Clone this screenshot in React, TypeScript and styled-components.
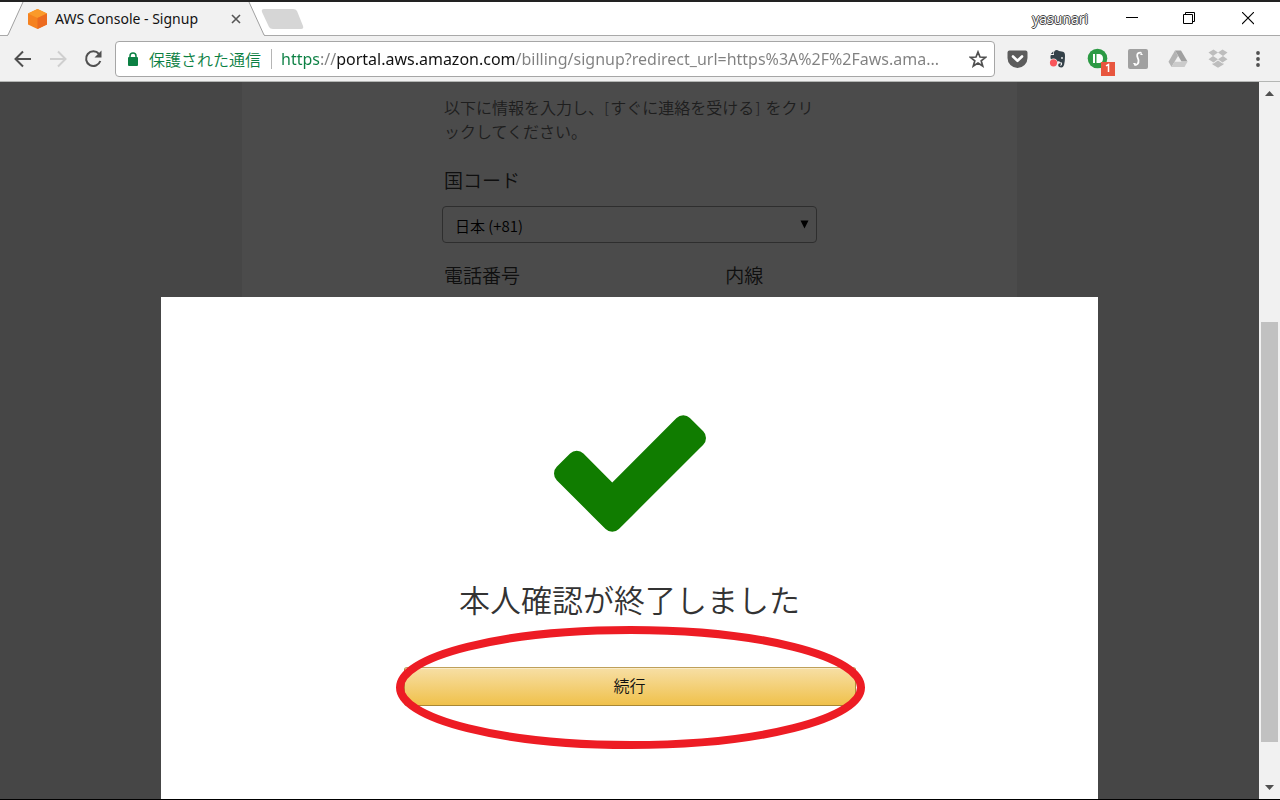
import React from 'react';
import styled, { createGlobalStyle } from 'styled-components';

const uiFont = '"Noto Sans", "Noto Sans CJK JP", sans-serif';
const pageFont = '"Noto Sans CJK JP", sans-serif';

const GlobalStyle = createGlobalStyle`
  *, *::before, *::after { box-sizing: border-box; }
  html, body, #root { height: 100%; }
  body { margin: 0; overflow: hidden; background: #000; font-family: ${uiFont}; }
  button, input, select { font-family: inherit; margin: 0; }
  svg { display: block; }
`;

const Window = styled.div`
  display: flex;
  flex-direction: column;
  height: 100%;
  background: #fff;
  border-top: 2px solid #222;
  border-bottom: 1px solid #000;
`;

const TitleBar = styled.header`
  display: flex;
  align-items: stretch;
  flex: none;
  height: 34px;
  padding-left: 7px;
  background: linear-gradient(#a9a9a9, #a9a9a9) bottom / 100% 1px no-repeat #fff;
`;

const Tab = styled.div`
  position: relative;
  display: flex;
  align-items: center;
  width: 258px;
  padding: 0 21px 0 20px;
`;

const TabShape = styled.svg`
  position: absolute;
  inset: 0;
  width: 100%;
  height: 100%;
`;

const TabTitle = styled.span`
  position: relative;
  flex: 1;
  margin-left: 7px;
  font-size: 14px;
  line-height: 20px;
  color: #111;
  white-space: nowrap;
`;

const Favicon = styled.svg`
  position: relative;
  width: 21px;
  height: 22px;
`;

const IconButton = styled.button<{ $width: number }>`
  position: relative;
  display: flex;
  align-items: center;
  justify-content: center;
  flex: none;
  width: ${(p) => p.$width}px;
  padding: 0;
  border: 0;
  background: none;
  color: #4a4a4a;
`;

const NewTab = styled(IconButton)`
  margin-left: -6px;
`;

const WindowControls = styled.div`
  display: flex;
  margin-left: auto;
  padding-right: 3px;
`;

const UserName = styled.span`
  align-self: center;
  margin-right: 15px;
  font-family: "Open Sans", sans-serif;
  font-size: 14px;
  line-height: 20px;
  color: #fff;
  text-shadow: 1px 0 #444, -1px 0 #444, 0 1px #444, 0 -1px #444;
`;

const Toolbar = styled.nav`
  display: flex;
  align-items: center;
  flex: none;
  height: 46px;
  padding: 0 2px 0 5px;
  background: #f1f1f1;
  border-bottom: 1px solid #b4b6b4;
`;

const AddressBar = styled.div`
  display: flex;
  align-items: center;
  flex: 1;
  min-width: 0;
  height: 36px;
  margin: 0 3px 0 5px;
  padding: 0 1px 0 11px;
  background: #fff;
  border: 1px solid #a6a6a6;
  border-radius: 4px;
`;

const Secure = styled.span`
  margin-left: 10px;
  padding-right: 10px;
  border-right: 1px solid #b5b5b5;
  font-family: ${pageFont};
  font-size: 16px;
  font-weight: 350;
  line-height: 20px;
  color: #0b8043;
  white-space: nowrap;
`;

const Address = styled.input`
  flex: 1;
  min-width: 0;
  height: 28px;
  margin-left: 9px;
  padding: 0;
  border: 0;
  outline: 0;
  font-size: 16px;
  color: #808080;
  -webkit-text-fill-color: transparent;
  background: linear-gradient(
    90deg,
    #0b8043 0 39px,
    #808080 39px 56px,
    #111 56px 234px,
    #808080 234px
  );
  background-clip: text;
  -webkit-background-clip: text;
`;

const Content = styled.div`
  display: flex;
  flex: 1;
  min-height: 0;
`;

const Page = styled.main`
  position: relative;
  flex: 1;
  overflow: hidden;
  background: #eaeaea;
  font-family: ${pageFont};
`;

const Sheet = styled.section`
  display: flex;
  justify-content: center;
  width: 62%;
  max-width: 775px;
  height: 100%;
  margin: 0 auto;
  background: #fafafa;
`;

const Form = styled.form`
  width: 375px;
  padding-top: 15px;
`;

const Intro = styled.p`
  margin: 0 0 22px;
  padding-left: 2px;
  font-family: "DejaVu Sans", ${pageFont};
  font-size: 16px;
  font-weight: 350;
  line-height: 24px;
  color: #666;
  white-space: nowrap;
`;

const Label = styled.label`
  display: block;
  padding-left: 2px;
  font-size: 19px;
  font-weight: 350;
  line-height: 26px;
  color: #333;
`;

const SelectBox = styled.div`
  position: relative;
  margin: 13px 0 19px;
`;

const Select = styled.select`
  appearance: none;
  display: block;
  width: 100%;
  height: 37px;
  padding: 2px 30px 0 12px;
  border: 1px solid #999;
  border-radius: 4px;
  background: transparent;
  font-size: 15px;
  font-weight: 350;
  color: #000;
`;

const Caret = styled.svg`
  position: absolute;
  top: 14px;
  right: 8px;
`;

const Fields = styled.div`
  display: grid;
  grid-template-columns: 3fr 1fr;
`;

const Field = styled.div`
  min-width: 0;
`;

const TextBox = styled.input`
  width: 90%;
  height: 37px;
  margin-top: 12px;
  border: 1px solid #999;
  border-radius: 4px;
`;

const Overlay = styled.div`
  position: absolute;
  inset: 0;
  display: flex;
  justify-content: center;
  padding-top: 215px;
  background: rgba(0, 0, 0, 0.7);
`;

const Dialog = styled.div`
  display: flex;
  flex-direction: column;
  align-items: center;
  width: 75%;
  max-width: 937px;
  padding-top: 118px;
  background: #fff;
`;

const DialogTitle = styled.h1`
  margin: 43px 0 44px;
  font-size: 31px;
  font-weight: 350;
  line-height: 48px;
  color: #333;
`;

const Highlighted = styled.div`
  position: relative;
  width: 452px;
`;

const Ring = styled.svg`
  position: absolute;
  top: -41px;
  left: -8px;
  pointer-events: none;
`;

const Continue = styled.button`
  display: block;
  width: 100%;
  height: 39px;
  padding: 0 0 3px;
  border: 1px solid;
  border-color: #bfa05a #b08c38 #a88734;
  border-radius: 3px;
  background: linear-gradient(#f7dfa5, #f0c14b);
  box-shadow: inset 0 1px 0 rgba(255, 255, 255, 0.4);
  font-size: 16px;
  font-weight: 350;
  color: #111;
`;

const Scrollbar = styled.aside`
  display: flex;
  flex-direction: column;
  flex: none;
  width: 21px;
  background: #f1f1f1;
`;

const ScrollButton = styled.button`
  display: flex;
  align-items: center;
  justify-content: center;
  height: 23px;
  padding: 0;
  border: 0;
  background: none;
`;

const Track = styled.div`
  display: flex;
  flex-direction: column;
  justify-content: flex-end;
  flex: 1;
  padding: 0 2px 34px;
`;

const Thumb = styled.div`
  height: 66%;
  background: #c1c1c1;
`;

function TitleRow() {
  return (
    <TitleBar>
      <Tab>
        <TabShape viewBox="0 0 258 34" preserveAspectRatio="none">
          <path d="M0 34 L1 33 L16 0 H242 L257 33 L258 34 Z" fill="#f1f1f1" />
          <path d="M0 33.5 L1 33 L16 0 M242 0 L257 33 L258 33.5" fill="none" stroke="#a0a0a0" />
        </TabShape>
        <Favicon viewBox="0 0 21 22">
          <path d="M10.500 1 L20 5.500 V16.500 L10.500 21 L1 16.500 V5.500 Z" fill="#f58220" />
          <path d="M10.500 1 L20 5.500 L10.500 10 L1 5.500 Z" fill="#fa9a2a" />
          <path d="M10.500 10 L20 5.500 V16.500 L10.500 21 Z" fill="#ec6a1f" />
        </Favicon>
        <TabTitle>AWS Console - Signup</TabTitle>
        <IconButton $width={16} aria-label="タブを閉じる">
          <svg width="10" height="10" viewBox="0 0 10 10" fill="none" stroke="#555" strokeWidth="1.600">
            <path d="M1 1 L9 9 M9 1 L1 9" />
          </svg>
        </IconButton>
      </Tab>
      <NewTab $width={46} aria-label="新しいタブ">
        <svg width="44" height="22" viewBox="0 0 44 22">
          <path d="M4 1 H33 Q36 1 37 3 L43 18 Q44 21 41 21 H13 Q10 21 9 19 L2 4 Q1 1 4 1 Z" fill="#d6d6d6" />
        </svg>
      </NewTab>
      <WindowControls>
        <UserName>yasunari</UserName>
        <IconButton $width={58} aria-label="最小化">
          <svg width="12" height="12" viewBox="0 0 12 12" stroke="#000">
            <path d="M0 4.500 H12" />
          </svg>
        </IconButton>
        <IconButton $width={58} aria-label="元に戻す">
          <svg width="14" height="14" viewBox="0 0 14 14" fill="none" stroke="#000">
            <path d="M0.500 2.500 H9.500 V11.500 H0.500 Z M2.500 2.500 V0.500 H11.500 V9.500 H9.500" />
          </svg>
        </IconButton>
        <IconButton $width={58} aria-label="閉じる">
          <svg width="12" height="14" viewBox="0 0 12 14" stroke="#000" strokeWidth="1.100">
            <path d="M0 0 L12 12 M12 0 L0 12" />
          </svg>
        </IconButton>
      </WindowControls>
    </TitleBar>
  );
}

function ToolRow() {
  return (
    <Toolbar>
      <IconButton $width={35} aria-label="戻る">
        <svg width="18" height="18" viewBox="0 0 18 18" fill="none" stroke="#505050" strokeWidth="2">
          <path d="M17 9 H2 M9 1.500 L1.500 9 L9 16.500" />
        </svg>
      </IconButton>
      <IconButton $width={35} aria-label="進む">
        <svg width="18" height="18" viewBox="0 0 18 18" fill="none" stroke="#cfcfcf" strokeWidth="2">
          <path d="M1 9 H16 M9 1.500 L16.500 9 L9 16.500" />
        </svg>
      </IconButton>
      <IconButton $width={35} aria-label="再読み込み">
        <svg width="20" height="20" viewBox="0 0 20 20">
          <path d="M16 5 A7.300 7.300 0 1 0 17.300 12" fill="none" stroke="#505050" strokeWidth="2" />
          <path d="M18.500 1.500 V8.500 H11.500 Z" fill="#505050" />
        </svg>
      </IconButton>
      <AddressBar>
        <svg width="12" height="14" viewBox="0 0 12 14">
          <path d="M3 6 V4 A3 3 0 0 1 9 4 V6" fill="none" stroke="#0b8043" strokeWidth="1.500" />
          <rect x="1" y="5" width="10" height="9" rx="1" fill="#0b8043" />
        </svg>
        <Secure>保護された通信</Secure>
        <Address
          aria-label="アドレス"
          defaultValue="https://portal.aws.amazon.com/billing/signup?redirect_url=https%3A%2F%2Faws.ama..."
        />
        <IconButton $width={30} aria-label="ブックマーク">
          <svg width="18" height="18" viewBox="0 0 18 18" fill="none" stroke="#505050" strokeWidth="1.700">
            <path d="M9 2 L11 7 L16.500 7.300 L12.200 10.800 L13.700 16 L9 13 L4.300 16 L5.800 10.800 L1.500 7.300 L7 7 Z" />
          </svg>
        </IconButton>
      </AddressBar>
      <IconButton $width={40} aria-label="Pocket">
        <svg width="22" height="20" viewBox="0 0 22 20">
          <path d="M2.500 1.500 H18.500 Q20.500 1.500 20.500 3.500 V9 A10 10 0 0 1 0.500 9 V3.500 Q0.500 1.500 2.500 1.500 Z" fill="#5c5c5c" />
          <path d="M6 7.500 L10.500 11.800 L15 7.500" fill="none" stroke="#fff" strokeWidth="2.600" strokeLinecap="round" strokeLinejoin="round" />
        </svg>
      </IconButton>
      <IconButton $width={40} aria-label="Evernote">
        <svg width="20" height="20" viewBox="0 0 20 20">
          <path d="M7 1.500 Q9 0.500 11 2 L15 2.800 Q17 3.200 17 7 Q17 18.500 13.500 18.500 Q10 18.500 10.200 15.800 Q10.500 13.800 12.800 14.300 V15.600 Q11.800 15.800 12.300 16.700 Q14.500 16.700 14 13.500 Q12 13.800 11 12 Q9 13.500 6 12 Q3 12 2.500 9 V7 Q2.500 6 3.500 6 H6 V3 Z" fill="#344149" />
          <path d="M2.800 5 L5.300 2.300 V5 Z" fill="#344149" />
          <circle cx="14" cy="9" r="0.900" fill="#f1f1f1" />
          <circle cx="5.500" cy="13.800" r="4.200" fill="#f1f1f1" />
          <circle cx="5.500" cy="13.800" r="3.600" fill="#f9565b" />
        </svg>
      </IconButton>
      <IconButton $width={40} aria-label="Pushbullet">
        <svg width="34" height="34" viewBox="0 0 34 34">
          <circle cx="16.500" cy="16.500" r="9.800" fill="#2c9a44" />
          <path d="M12 12 H14 V21 H12 Z M15.500 12 H18.500 Q22 12.500 22 16.500 Q22 20.500 18.500 21 H15.500 Z" fill="#fff" />
          <rect x="20" y="20" width="14" height="14" fill="#e8563f" />
          <path d="M25 23.800 L27.500 22.500 V30" fill="none" stroke="#fff" strokeWidth="1.500" />
        </svg>
      </IconButton>
      <IconButton $width={40} aria-label="Stylish">
        <svg width="20" height="20" viewBox="0 0 20 20">
          <rect width="20" height="20" rx="2" fill="#a0a0a0" />
          <path d="M13.500 3.800 Q8.800 3.200 9.200 7 Q9.700 9 10.500 11 Q11 16 6.500 16.200" fill="none" stroke="#fff" strokeWidth="1.800" />
          <path d="M12 6 H15 L13.500 4 Z M5 14 H8 L6.500 16.500 Z" fill="#fff" />
        </svg>
      </IconButton>
      <IconButton $width={40} aria-label="Google Drive">
        <svg width="20" height="18" viewBox="0 0 20 18">
          <path d="M7 0.500 L10 6 L3.500 17 L0.500 11.800 Z" fill="#b4b4b4" />
          <path d="M7 0.500 H13 L19.500 11.500 H13.500 Z" fill="#a0a0a0" />
          <path d="M6.500 11.800 H19.500 L16.500 17 H3.500 Z" fill="#cbcbcb" />
        </svg>
      </IconButton>
      <IconButton $width={40} aria-label="Dropbox">
        <svg width="20" height="19" viewBox="0 0 20 19" fill="#bdbdbd">
          <path d="M5.500 0.500 L10 3.500 L5 7 L0.500 3.500 Z M14.500 0.500 L19.500 3.500 L15 7 L10 3.500 Z M5 7 L10 10.300 L5.500 13.500 L0.500 10.300 Z M15 7 L19.500 10.300 L14.500 13.500 L10 10.300 Z M10 11.500 L14.500 14.500 L15.500 14.200 V15.500 L10 18.700 L4.500 15.500 V14.200 L5.500 14.500 Z" />
        </svg>
      </IconButton>
      <IconButton $width={40} aria-label="メニュー">
        <svg width="4" height="16" viewBox="0 0 4 16" fill="#505050">
          <circle cx="2" cy="2" r="1.900" />
          <circle cx="2" cy="8" r="1.900" />
          <circle cx="2" cy="14" r="1.900" />
        </svg>
      </IconButton>
    </Toolbar>
  );
}

export default function App() {
  return (
    <Window>
      <GlobalStyle />
      <TitleRow />
      <ToolRow />
      <Content>
        <Page>
          <Sheet>
            <Form>
              <Intro>
                以下に情報を入力し、[すぐに連絡を受ける] をクリ
                <br />
                ックしてください。
              </Intro>
              <Label htmlFor="country">国コード</Label>
              <SelectBox>
                <Select id="country">
                  <option>日本 (+81)</option>
                </Select>
                <Caret width="9" height="9" viewBox="0 0 9 9">
                  <path d="M0.500 0.500 H8.500 L4.500 8.500 Z" fill="#000" />
                </Caret>
              </SelectBox>
              <Fields>
                <Field>
                  <Label htmlFor="phone">電話番号</Label>
                  <TextBox id="phone" />
                </Field>
                <Field>
                  <Label htmlFor="extension">内線</Label>
                  <TextBox id="extension" />
                </Field>
              </Fields>
            </Form>
          </Sheet>
          <Overlay>
            <Dialog role="dialog" aria-labelledby="done">
              <svg width="152" height="117" viewBox="121 334 1550 1188">
                <path
                  fill="#107c00"
                  d="M1671 566q0 40-28 68l-724 724-136 136q-28 28-68 28t-68-28l-136-136-362-362q-28-28-28-68t28-68l136-136q28-28 68-28t68 28l294 295 656-657q28-28 68-28t68 28l136 136q28 28 28 68z"
                />
              </svg>
              <DialogTitle id="done">本人確認が終了しました</DialogTitle>
              <Highlighted>
                <Continue>続行</Continue>
                <Ring width="469" height="123" viewBox="0 0 469 123">
                  <ellipse cx="234.500" cy="61.500" rx="230.500" ry="57.500" fill="none" stroke="#ed1c24" strokeWidth="8" />
                </Ring>
              </Highlighted>
            </Dialog>
          </Overlay>
        </Page>
        <Scrollbar>
          <ScrollButton aria-label="上へスクロール">
            <svg width="9" height="5" viewBox="0 0 9 5">
              <path d="M0 5 L4.500 0 L9 5 Z" fill="#505050" />
            </svg>
          </ScrollButton>
          <Track>
            <Thumb />
          </Track>
          <ScrollButton aria-label="下へスクロール">
            <svg width="9" height="5" viewBox="0 0 9 5">
              <path d="M0 0 L4.500 5 L9 0 Z" fill="#505050" />
            </svg>
          </ScrollButton>
        </Scrollbar>
      </Content>
    </Window>
  );
}
